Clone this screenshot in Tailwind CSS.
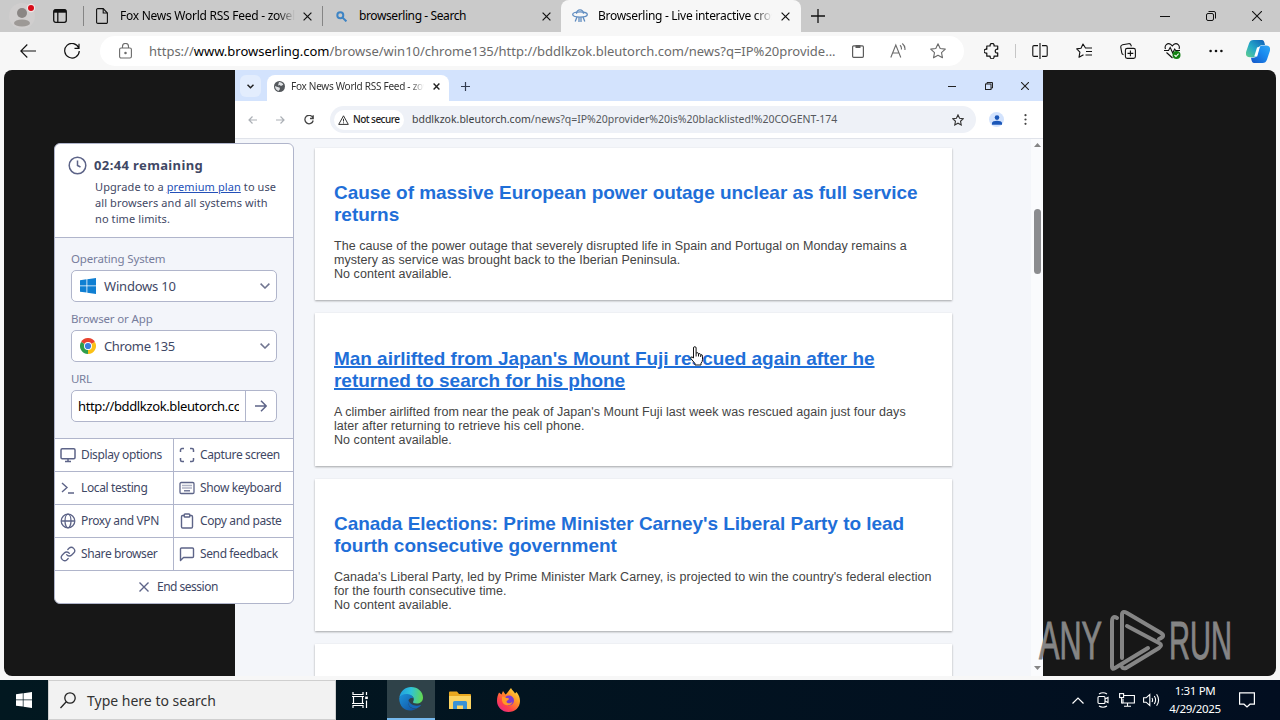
<!DOCTYPE html>
<html lang="en">
<head>
    <meta charset="UTF-8">
    <meta name="viewport" content="width=device-width, initial-scale=1.0">
    <title>Browserling - Live interactive cross-browser testing</title>
    <script src="https://cdn.jsdelivr.net/npm/@tailwindcss/browser@4"></script>
</head>
<body class="w-[1280px] h-[720px] overflow-hidden bg-[#f7f7f7] font-['Noto_Sans','Open_Sans',sans-serif] text-black flex flex-col relative">

    <!-- Edge tab strip -->
    <div class="h-8 shrink-0 bg-[#cacaca] flex items-center whitespace-nowrap">
        <div class="w-[44px] flex justify-center">
            <svg class="w-[26px] h-[26px]" viewBox="0 0 26 26">
                <circle cx="13" cy="13" r="13" fill="#d0cece"/>
                <circle cx="13" cy="10" r="5" fill="#8a8684"/>
                <ellipse cx="13" cy="20" rx="8" ry="3.6" fill="#9d9996"/>
                <circle cx="22" cy="5" r="4.2" fill="#f0e4e4"/>
                <circle cx="22" cy="5" r="3" fill="#d80b18"/>
            </svg>
        </div>
        <div class="w-[39px] flex justify-center">
            <svg class="w-[14px] h-[14px] -ml-[7px]" viewBox="0 0 14 14" fill="none" stroke="#111" stroke-width="1.3">
                <rect x=".7" y=".7" width="12.6" height="12.6" rx="2"/>
                <path d="M1 2.2h12" stroke-width="3"/><path d="M4.8 3v10"/>
            </svg>
        </div>
        <div class="w-px h-5 bg-[#858585]"></div>
        <div class="w-[238px] flex items-center pl-[12px]">
            <svg class="w-[12px] h-[16px] shrink-0" viewBox="0 0 12 16" fill="none" stroke="#111" stroke-width="1.1">
                <path d="M2 .6h5.2L11.4 5v9.2a1.2 1.2 0 0 1-1.2 1.2H2A1.2 1.2 0 0 1 .6 14.2V1.8A1.2 1.2 0 0 1 2 .6z"/><path d="M7.2 .8V5h4"/>
            </svg>
            <div class="ml-[12px] w-[175px] overflow-hidden text-[12px] leading-4 tracking-[-0.26px] mask-r-from-90%">Fox News World RSS Feed - zovel</div>
            <svg class="ml-[8px] w-[9px] h-[9px]" viewBox="0 0 9 9" stroke="#111" stroke-width="1.2"><path d="M.6.6l7.8 7.8M8.4.6L.6 8.4"/></svg>
        </div>
        <div class="w-px h-5 bg-[#858585]"></div>
        <div class="w-[238px] flex items-center pl-[13px]">
            <svg class="w-[11px] h-[11px] shrink-0" viewBox="0 0 11 11" fill="none" stroke="#3e84c4" stroke-width="2"><circle cx="4.3" cy="4.3" r="3"/><path d="M6.6 6.6l3.8 3.8"/></svg>
            <div class="ml-[12px] w-[176px] text-[12px] leading-4 tracking-[-0.4px]">browserling - Search</div>
            <svg class="ml-[7px] w-[9px] h-[9px]" viewBox="0 0 9 9" stroke="#111" stroke-width="1.2"><path d="M.6.6l7.8 7.8M8.4.6L.6 8.4"/></svg>
        </div>
        <div class="w-[240px] h-full rounded-t-lg bg-[#f7f7f7] flex items-center pl-[11px]">
            <svg class="w-4 h-[14px] shrink-0" viewBox="0 0 16 14" fill="none" stroke="#5f8cc0" stroke-width="1.3">
                <path d="M4.5 4.8a3.5 4 0 0 1 7 0"/><ellipse cx="8" cy="5.5" rx="7.3" ry="2.6"/><path d="M5 8L3.2 12.5M7 8.2V13M9 8.2V13M11 8l1.8 4.5"/>
            </svg>
            <div class="ml-[10px] w-[174px] overflow-hidden text-[12px] leading-4 tracking-[-0.3px] mask-r-from-90%">Browserling - Live interactive cross-</div>
            <svg class="ml-[9px] w-[9px] h-[9px]" viewBox="0 0 9 9" stroke="#111" stroke-width="1.2"><path d="M.6.6l7.8 7.8M8.4.6L.6 8.4"/></svg>
        </div>
        <svg class="ml-[10px] w-[14px] h-[14px]" viewBox="0 0 14 14" stroke="#111" stroke-width="1.3"><path d="M0 7h14M7 0v14"/></svg>
        <div class="ml-auto flex items-center">
            <div class="w-[46px] flex justify-center"><svg class="w-[10px] h-[10px]" viewBox="0 0 10 10" stroke="#111"><path d="M0 5.5h10"/></svg></div>
            <div class="w-[46px] flex justify-center"><svg class="w-[10px] h-[10px]" viewBox="0 0 10 10" fill="none" stroke="#111"><rect x=".5" y="2.5" width="7" height="7" rx="1.5"/><path d="M2.5.5H8A1.5 1.5 0 0 1 9.5 2v5.5"/></svg></div>
            <div class="w-[46px] flex justify-center"><svg class="w-[10px] h-[10px]" viewBox="0 0 10 10" stroke="#111" stroke-width="1.1"><path d="M0 0l10 10M10 0L0 10"/></svg></div>
        </div>
    </div>

    <!-- Edge toolbar -->
    <div class="h-[38px] shrink-0 flex items-center text-[#222]">
        <svg class="ml-[20px] w-4 h-[14px]" viewBox="0 0 16 14" fill="none" stroke="#111" stroke-width="1.1"><path d="M16 7H.8M7.3.5L.8 7l6.5 6.5"/></svg>
        <svg class="ml-[28px] w-4 h-4" viewBox="0 0 16 16" fill="none" stroke="#111" stroke-width="1.2"><path d="M14.8 5A7.3 7.3 0 1 0 15.3 8M15 .8v4.5h-4.5"/></svg>
        <div class="ml-[20px] w-[864px] h-[30px] rounded-full bg-white flex items-center text-[#6b6b6b]">
            <svg class="ml-[19px] w-[13px] h-[16px]" viewBox="0 0 13 16" fill="none" stroke="#6b6b6b" stroke-width="1.1"><rect x=".6" y="5" width="11.8" height="10" rx="1.5"/><path d="M3.5 5V3.5a3 3 0 0 1 6 0V5"/><circle cx="6.5" cy="10" r=".7" fill="#6b6b6b"/></svg>
            <div class="ml-[17px] w-[689px] whitespace-nowrap text-[13px] leading-5 tracking-[-0.01px]">https://<span class="text-black">www.browserling.com</span>/browse/win10/chrome135/http://bddlkzok.bleutorch.com/news?q=IP%20provide...</div>
            <div class="w-10 flex justify-center"><svg class="w-3 h-[14px]" viewBox="0 0 12 14" fill="none" stroke="#5c5c5c" stroke-width="1.2"><rect x=".6" y="1.9" width="10.8" height="11.4" rx="1"/><path d="M3.5 2.5h5" stroke-width="3"/></svg></div>
            <div class="w-10 flex justify-center"><svg class="w-4 h-4" viewBox="0 0 16 16" fill="none" stroke="#6b6b6b" stroke-width="1.1"><path d="M.8 14.5L5.8 2l5 12.5M2.5 10h6.6M10 2.2c1.3 1 1.6 2.6 1.4 4.3M12.3.5c2.2 1.8 3 4 2.6 6.5"/></svg></div>
            <div class="w-10 flex justify-center"><svg class="w-4 h-4" viewBox="0 0 16 16" fill="none" stroke="#6b6b6b" stroke-width="1.1" stroke-linejoin="round"><path d="M8 .8l2.2 4.7 5.1.6-3.8 3.5 1 5.2L8 12.2l-4.5 2.6 1-5.2L.7 6.1l5.1-.6z"/></svg></div>
        </div>
        <div class="ml-[5px] w-[46px] flex justify-center"><svg class="w-4 h-4" viewBox="0 0 16 16" fill="none" stroke="#111" stroke-width="1.2" stroke-linejoin="round"><path d="M2.8 3h3.4a2 2 0 1 1 3.8 0h3.7v3.3a1.9 1.9 0 1 0 0 3.6v3.3H10a2 2 0 1 1-3.8 0H2.8V10a2 2 0 1 1 0-3.7z"/></svg></div>
        <div class="w-px h-[14px] bg-[#c6c6c6]"></div>
        <div class="ml-[2px] w-[44px] flex justify-center"><svg class="w-4 h-4" viewBox="0 0 16 16" fill="none" stroke="#111" stroke-width="1.1"><path d="M6 2.6H2A1.2 1.2 0 0 0 .8 3.8v8.4A1.2 1.2 0 0 0 2 13.4h4M10 2.6h4a1.2 1.2 0 0 1 1.2 1.2v8.4a1.2 1.2 0 0 1-1.2 1.2h-4M8 0v16"/></svg></div>
        <div class="w-[44px] flex justify-center"><svg class="w-4 h-4" viewBox="0 0 16 16" fill="none" stroke="#111" stroke-width="1.1" stroke-linejoin="round"><path d="M9.5 5L7 1 5 5.3.7 5.9l3.2 3.2-.9 5.2 4.5-2.5M9 5h7M10 8.5h6M9.5 12H16"/></svg></div>
        <div class="w-[44px] flex justify-center"><svg class="w-4 h-4" viewBox="0 0 16 16" fill="none" stroke="#111" stroke-width="1.1"><rect x="5.4" y="5.4" width="10" height="10" rx="1.8"/><path d="M10.4 7.5v5.8M7.5 10.4h5.8M3.5 11.8A2.3 2.3 0 0 1 1.7 9.5L.8 4.3a2.3 2.3 0 0 1 1.8-2.6L8.5.7a2.3 2.3 0 0 1 2.6 1.6l.2 1"/></svg></div>
        <div class="w-[44px] flex justify-center"><svg class="w-[17px] h-4" viewBox="0 0 17 16" fill="none" stroke="#111" stroke-width="1.1"><path d="M1.5 6C0 2.5 3.5-.5 6.5 1.2L8.3 3l1.8-1.8C13-.5 16.5 2.5 15 6M0 7.5h4.5l1.7-3 2.5 5.5 2-4 1 1.5H16M2.5 9.5l6 5.5"/><circle cx="12.5" cy="12" r="4" fill="#138013" stroke="none"/><path d="M10.5 12l1.5 1.5 2.6-2.8" stroke="#fff"/></svg></div>
        <div class="w-[44px] flex justify-center"><svg class="w-[14px] h-1" viewBox="0 0 14 4" fill="#111"><circle cx="1.6" cy="2" r="1.3"/><circle cx="7" cy="2" r="1.3"/><circle cx="12.4" cy="2" r="1.3"/></svg></div>
        <svg class="ml-[8px] w-6 h-[23px]" viewBox="0 0 24 23">
            <defs>
                <linearGradient id="cp1" x1="0" y1="1" x2="1" y2="0"><stop offset="0" stop-color="#62cf8c"/><stop offset=".45" stop-color="#25a9c8"/><stop offset="1" stop-color="#0d5cb8"/></linearGradient>
                <linearGradient id="cp2" x1="0" y1="1" x2="1" y2="0"><stop offset="0" stop-color="#1556c8"/><stop offset=".6" stop-color="#1a8cf0"/><stop offset="1" stop-color="#30a8f5"/></linearGradient>
            </defs>
            <path d="M7.5 0h8.3c2 0 2.5 1.5 3.2 5h-2.5c-2 0-3 1-3.6 3l-2 6.5c-.6 2-1.6 2.8-3.4 2.8H4c-3.5 0-4.8-2.3-3.7-6L3 3.5C3.8 1 5.2 0 7.5 0z" fill="url(#cp1)"/>
            <path d="M16.5 23H8.2c-2 0-2.5-1.5-3.2-5.2h2.5c2 0 3-1 3.6-3l2-6.5c.6-2 1.6-2.8 3.4-2.8H20c3.5 0 4.8 2.3 3.7 6L21 19.5c-.8 2.5-2.2 3.5-4.5 3.5z" fill="url(#cp2)"/>
            <path d="M14 6.500L11.200 16.500H8.200l2.800-9z" fill="#fff"/>
        </svg>
    </div>

    <!-- Page area -->
    <div class="mx-1 h-[606px] shrink-0 rounded-lg bg-[#171717] overflow-hidden pl-[231px]">
        <div class="w-[808px] h-full bg-[#f4f6fa] flex flex-col whitespace-nowrap">

            <!-- Remote Chrome tab strip -->
            <div class="h-[31px] shrink-0 bg-[#d3e3fd] flex">
                <div class="ml-[5px] mt-[5px] w-[21px] h-[22px] rounded-md bg-[#e3edfd] flex items-center justify-center"><svg class="w-[7px] h-[5px]" viewBox="0 0 7 5" fill="none" stroke="#222" stroke-width="1.5"><path d="M.5.7l3 3 3-3"/></svg></div>
                <div class="ml-[6px] mt-[5px] w-[182px] rounded-t-lg bg-white flex items-center pb-1">
                    <svg class="ml-[7px] w-[11px] h-[11px] shrink-0" viewBox="0 0 11 11"><circle cx="5.5" cy="5.5" r="5.5" fill="#54585c"/><path d="M5 1c2 0 3.5 1 4.3 2.8L7 5 5.5 4 4 4.5zM1 5l2.5 1 2 .5.5 1.5-1.5 2C2.5 9.5 1 7.5 1 5z" fill="#dfe1e4"/></svg>
                    <div class="ml-[6px] w-[133px] overflow-hidden text-[10px] leading-4 tracking-[-0.27px] text-[#333] mask-r-from-90%">Fox News World RSS Feed - zovel</div>
                    <svg class="ml-[9px] w-[7px] h-[7px]" viewBox="0 0 7 7" stroke="#222" stroke-width="1.4"><path d="M.6.6l5.8 5.8M6.4.6L.6 6.4"/></svg>
                </div>
                <svg class="ml-[12px] mt-3 w-[9px] h-[9px]" viewBox="0 0 9 9" stroke="#333c50" stroke-width="1.2"><path d="M0 4.5h9M4.5 0v9"/></svg>
                <svg class="ml-auto mt-3 w-[8px] h-[8px]" viewBox="0 0 8 8" stroke="#222" stroke-width="1.2"><path d="M0 4.5h8"/></svg>
                <svg class="ml-[29px] mt-3 w-[8px] h-[8px]" viewBox="0 0 8 8" fill="none" stroke="#222"><rect x=".5" y="2" width="5.5" height="5.5"/><path d="M2 2V.5h5.5V6H6"/></svg>
                <svg class="ml-[28px] mr-[14px] mt-3 w-[8px] h-[8px]" viewBox="0 0 8 8" stroke="#222" stroke-width="1.1"><path d="M0 0l8 8M8 0L0 8"/></svg>
            </div>

            <!-- Remote Chrome toolbar -->
            <div class="h-[38px] shrink-0 bg-white border-b border-[#e0e3ea] flex items-center">
                <svg class="ml-[13px] w-[9px] h-[8px]" viewBox="0 0 9 8" fill="none" stroke="#acb0b6" stroke-width="1.2"><path d="M9 4H1M4.5.5L1 4l3.5 3.5"/></svg>
                <svg class="ml-[19px] w-[9px] h-[8px]" viewBox="0 0 9 8" fill="none" stroke="#acb0b6" stroke-width="1.2"><path d="M0 4h8M4.5.5L8 4 4.5 7.5"/></svg>
                <svg class="ml-[19px] w-[10px] h-[10px]" viewBox="0 0 10 10" fill="none" stroke="#444" stroke-width="1.3"><path d="M9 3A4.2 4.2 0 1 0 9.2 5.5M9.2.3v3.2H6"/></svg>
                <div class="ml-[16px] w-[646px] h-[27px] rounded-full bg-[#eef1f7] flex items-center text-[#3c4043]">
                    <div class="ml-[4px] w-[70px] h-[20px] rounded-full bg-white flex items-center text-[10px]">
                        <svg class="ml-[4px] w-[11px] h-[10px]" viewBox="0 0 11 10" fill="none" stroke="#333"><path d="M5.5.8L10.3 9.4H.7z"/><path d="M5.5 3.8v2.7M5.5 7.4v1"/></svg>
                        <span class="ml-[4px] font-medium text-[#222] tracking-[-0.55px]">Not secure</span>
                    </div>
                    <span class="ml-[8px] pt-px text-[10.5px]">bddlkzok.bleutorch.com<span class="text-[#55585c]">/news?q=IP%20provider%20is%20blacklisted!%20COGENT-174</span></span>
                    <svg class="ml-auto mr-[12px] w-[12px] h-[12px]" viewBox="0 0 16 16" fill="none" stroke="#333" stroke-width="1.5"><path d="M8 1.2l2.1 4.5 4.9.6-3.6 3.4.9 4.9L8 12.2l-4.3 2.4.9-4.9L1 6.3l4.9-.6z"/></svg>
                </div>
                <div class="ml-[13px] w-[15px] h-[15px] rounded-full bg-[#d3e3fd] flex items-center justify-center"><svg class="w-[10px] h-[10px]" viewBox="0 0 10 10" fill="#1a56b8"><circle cx="5" cy="2.6" r="2.3"/><path d="M0 9.8V8c0-3 10-3 10 0v1.8z"/></svg></div>
                <svg class="ml-[20px] w-[3px] h-[11px]" viewBox="0 0 3 11" fill="#444"><circle cx="1.5" cy="1.2" r="1.1"/><circle cx="1.5" cy="5.5" r="1.1"/><circle cx="1.5" cy="9.8" r="1.1"/></svg>
            </div>

            <!-- News feed -->
            <div class="flex-1 min-h-0 flex font-['Liberation_Sans',sans-serif]">
                <div class="flex-1 pl-[80px] pt-[9px] flex flex-col gap-[13px] overflow-hidden">
                    <div class="w-[637px] h-[152px] shrink-0 bg-white shadow-[0_1px_2px_#00000055] pl-[19px] pt-[34px]">
                        <h2 class="text-[19px] leading-[22px] font-bold tracking-[-0.04px] text-[#1f6fd8]">Cause of massive European power outage unclear as full service<br>returns</h2>
                        <p class="mt-[13px] text-[12.5px] leading-[14px] tracking-[0.05px] text-[#444]">The cause of the power outage that severely disrupted life in Spain and Portugal on Monday remains a<br>mystery as service was brought back to the Iberian Peninsula.<br>No content available.</p>
                    </div>
                    <div class="w-[637px] h-[153px] shrink-0 bg-white shadow-[0_1px_2px_#00000055] pl-[19px] pt-[35px]">
                        <h2 class="text-[19px] leading-[22px] font-bold tracking-[-0.04px] text-[#1f6fd8] underline decoration-2">Man airlifted from Japan's Mount Fuji rescued again after he<br>returned to search for his phone</h2>
                        <p class="mt-[13px] text-[12.5px] leading-[14px] tracking-[0.05px] text-[#444]">A climber airlifted from near the peak of Japan's Mount Fuji last week was rescued again just four days<br>later after returning to retrieve his cell phone.<br>No content available.</p>
                    </div>
                    <div class="w-[637px] h-[152px] shrink-0 bg-white shadow-[0_1px_2px_#00000055] pl-[19px] pt-[34px]">
                        <h2 class="text-[19px] leading-[22px] font-bold tracking-[-0.04px] text-[#1f6fd8]">Canada Elections: Prime Minister Carney's Liberal Party to lead<br>fourth consecutive government</h2>
                        <p class="mt-[13px] text-[12.5px] leading-[14px] tracking-[0.05px] text-[#444]">Canada's Liberal Party, led by Prime Minister Mark Carney, is projected to win the country's federal election<br>for the fourth consecutive time.<br>No content available.</p>
                    </div>
                    <div class="w-[637px] h-[153px] shrink-0 bg-white shadow-[0_1px_2px_#00000055]"></div>
                </div>
                <div class="w-[12px] bg-[#fafbfd] flex flex-col items-center">
                    <svg class="mt-1 w-[7px] h-[5px]" viewBox="0 0 7 5" fill="#858585"><path d="M3.5 0L7 4H0z"/></svg>
                    <div class="mt-[61px] w-[7px] h-[65px] rounded-full bg-[#8b8c8f]"></div>
                    <svg class="mt-auto mb-[6px] w-[7px] h-[5px]" viewBox="0 0 7 5" fill="#858585"><path d="M3.5 5L0 1h7z"/></svg>
                </div>
            </div>
        </div>
    </div>

    <!-- Session panel -->
    <div class="absolute left-[54px] top-[143px] w-[240px] h-[461px] rounded-md border border-[#b0b5cb] bg-white overflow-hidden flex flex-col text-[#3f4865] whitespace-nowrap">
        <div class="h-[93px] shrink-0 flex pl-[13px] pt-[12px]">
            <svg class="w-[19px] h-[19px] shrink-0" viewBox="0 0 19 19" fill="none" stroke="#5d6488" stroke-width="1.5"><circle cx="9.5" cy="9.5" r="8.3"/><path d="M9.5 4.5v5l3 1.5"/></svg>
            <div class="ml-[8px]">
                <div class="-ml-px text-[13px] leading-[18px] font-bold tracking-[0.38px]">02:44 remaining</div>
                <div class="mt-[5px] text-[11px] leading-4 tracking-[0.1px]">Upgrade to a <span class="underline text-[#2450b8]">premium plan</span> to use<br>all browsers and all systems with<br>no time limits.</div>
            </div>
        </div>
        <div class="h-[202px] shrink-0 border-y border-[#b0b5cb] bg-[#f3f5fa] px-[16px] pt-[12px]">
            <div class="h-5 text-[11.5px] leading-[17px] text-[#777d9c] tracking-[-0.15px]">Operating System</div>
            <div class="h-8 w-[206px] rounded-[5px] border border-[#b0b5cb] bg-white flex items-center px-[8px]">
                <svg class="w-4 h-4" viewBox="0 0 16 16" fill="#0f7fd2"><path d="M0 2.2L6.5 1.3v6.2H0zM7.3 1.2L16 0v7.5H7.3zM0 8.3h6.5v6.3L0 13.7zM7.3 8.3H16V16l-8.7-1.2z"/></svg>
                <span class="ml-[8px] pt-0.5 text-[13px] tracking-[-0.2px]">Windows 10</span>
                <svg class="ml-auto -mr-[2px] w-[10px] h-[6px]" viewBox="0 0 10 6" fill="none" stroke="#707590" stroke-width="1.5"><path d="M.6.6L5 5 9.4.6"/></svg>
            </div>
            <div class="mt-[8px] h-5 text-[11.5px] leading-[17px] text-[#777d9c] tracking-[-0.15px]">Browser or App</div>
            <div class="h-8 w-[206px] rounded-[5px] border border-[#b0b5cb] bg-white flex items-center px-[8px]">
                <svg class="w-4 h-4" viewBox="0 0 16 16">
                    <path d="M8 8L1.07 4A8 8 0 0 1 14.93 4z" fill="#e8432f"/>
                    <path d="M8 8L14.93 4A8 8 0 0 1 8 16z" fill="#fbc116"/>
                    <path d="M8 8V16A8 8 0 0 1 1.07 4z" fill="#2f9e4c"/>
                    <circle cx="8" cy="8" r="4" fill="#fff"/><circle cx="8" cy="8" r="3.1" fill="#3a7de0"/>
                </svg>
                <span class="ml-[8px] pt-0.5 text-[13px] tracking-[-0.35px]">Chrome 135</span>
                <svg class="ml-auto -mr-[2px] w-[10px] h-[6px]" viewBox="0 0 10 6" fill="none" stroke="#707590" stroke-width="1.5"><path d="M.6.6L5 5 9.4.6"/></svg>
            </div>
            <div class="mt-[8px] h-5 text-[11.5px] leading-[17px] text-[#777d9c] tracking-[-0.3px]">URL</div>
            <div class="h-8 w-[206px] rounded-[5px] border border-[#b0b5cb] bg-white flex items-center pl-[6px]">
                <div class="w-[161px] overflow-hidden pt-0.5 text-[13px] text-black tracking-[-0.37px]">http://bddlkzok.bleutorch.com</div>
                <div class="ml-[6px] w-px h-full bg-[#b0b5cb]"></div>
                <svg class="ml-[9px] w-3 h-3" viewBox="0 0 12 12" fill="none" stroke="#5d6488" stroke-width="1.5"><path d="M0 6h11M6 .8L11.2 6 6 11.2"/></svg>
            </div>
        </div>
        <div class="grid grid-cols-[119px_119px] auto-rows-[33px] text-[12px] tracking-[-0.38px] [&>div]:flex [&>div]:items-center [&>div]:gap-[5px] [&>div]:pl-[5px] [&>div]:border-b [&>div]:border-[#b0b5cb] [&>div:nth-child(odd)]:border-r [&_svg]:w-4 [&_svg]:h-4 [&_svg]:shrink-0">
            <div><svg viewBox="0 0 16 16" fill="none" stroke="#5d6488" stroke-width="1.5"><rect x="1" y="1.8" width="14" height="10" rx="1.2"/><path d="M8 12v3M5 14.5h6"/></svg>Display options</div>
            <div><svg viewBox="0 0 16 16" fill="none" stroke="#5d6488" stroke-width="1.5"><path d="M1.5 5V3A1.5 1.5 0 0 1 3 1.5h2M11 1.5h2A1.5 1.5 0 0 1 14.5 3v2M14.5 11v2a1.5 1.5 0 0 1-1.5 1.5h-2M5 14.5H3A1.5 1.5 0 0 1 1.5 13v-2"/></svg>Capture screen</div>
            <div><svg viewBox="0 0 16 16" fill="none" stroke="#5d6488" stroke-width="1.4"><path d="M2 3l5 4.5L2 12M8 13h6"/></svg>Local testing</div>
            <div><svg viewBox="0 0 16 16" fill="none" stroke="#5d6488" stroke-width="1.3"><rect x="1" y="2.5" width="14" height="11" rx="1.2"/><path d="M3.5 5.5h9M3.5 8h9" stroke-dasharray="1 1"/><path d="M5 10.8h6"/></svg>Show keyboard</div>
            <div><svg viewBox="0 0 16 16" fill="none" stroke="#5d6488" stroke-width="1.3"><circle cx="8" cy="8" r="6.8"/><ellipse cx="8" cy="8" rx="3" ry="6.8"/><path d="M1.2 8h13.6"/></svg>Proxy and VPN</div>
            <div><svg viewBox="0 0 16 16" fill="none" stroke="#5d6488" stroke-width="1.4"><rect x="2.5" y="2.5" width="11" height="12.5" rx="1.2"/><rect x="5.2" y="1" width="5.6" height="3" rx=".8" fill="#fff"/></svg>Copy and paste</div>
            <div><svg viewBox="0 0 24 24" fill="none" stroke="#5d6488" stroke-width="2" stroke-linecap="round"><path d="M10 13a5 5 0 0 0 7.54.54l3-3a5 5 0 0 0-7.07-7.07l-1.72 1.71"/><path d="M14 11a5 5 0 0 0-7.54-.54l-3 3a5 5 0 0 0 7.07 7.07l1.71-1.71"/></svg>Share browser</div>
            <div><svg viewBox="0 0 16 16" fill="none" stroke="#5d6488" stroke-width="1.4" stroke-linejoin="round"><path d="M2.5 2h11a1 1 0 0 1 1 1v7.5a1 1 0 0 1-1 1h-9L1.5 14.5V3a1 1 0 0 1 1-1z"/></svg>Send feedback</div>
        </div>
        <div class="flex-1 flex items-center pl-[84px] text-[12px] tracking-[-0.5px]">
            <svg class="w-[10px] h-[10px] mr-[8px]" viewBox="0 0 10 10" stroke="#5d6488" stroke-width="1.4"><path d="M.5.5l9 9M9.5.5l-9 9"/></svg>End session
        </div>
    </div>

    <!-- Watermark -->
    <svg class="absolute left-[1038px] top-[605px] w-[200px] h-[68px]" viewBox="0 0 200 68" fill="#858585">
        <text x="1" y="54" font-family="Liberation Sans" font-size="54" textLength="63" lengthAdjust="spacingAndGlyphs" stroke="#858585" stroke-width="1">ANY</text>
        <text x="131" y="54" font-family="Liberation Sans" font-size="54" textLength="63" lengthAdjust="spacingAndGlyphs" stroke="#858585" stroke-width="1">RUN</text>
        <g fill="none" stroke="#858585" stroke-width="4" stroke-linejoin="round" stroke-linecap="round">
            <path d="M79 15q-5-3-5 4v45q0 3 3 1l33-20" transform="translate(0 -2)"/>
            <path d="M84 53V10q0-5 5-2l34 20q5 3-2 6"/>
            <path d="M89 21l32 17q4 2 0 5L88 63q-3 1-4-1"/>
        </g>
    </svg>

    <!-- Hand pointer -->
    <svg class="absolute left-[690px] top-[346px] w-[13px] h-[20px]" viewBox="0 0 13 20" fill="#fff" stroke="#111" stroke-width="1" stroke-linejoin="round">
        <path d="M3.5 12V2a1.3 1.3 0 0 1 2.6 0v5q2.2-1 2.4.8 2-.6 2.2.8 1.8-.2 1.8 1.6v3.5q0 2-1.5 3.5v1.8H5v-1.5L.8 12.5q-.5-2 1.2-1.5z"/><path d="M6.1 7v3.5M8.5 8v2.5M10.7 9v2"/>
    </svg>

    <!-- Windows taskbar -->
    <div class="mt-1 h-10 shrink-0 bg-linear-to-r from-[#021820] to-[#020e20] flex items-center text-white whitespace-nowrap">
        <div class="w-12 flex justify-center"><svg class="w-4 h-4" viewBox="0 0 16 16" fill="#fff"><path d="M0 2.2l6.8-.9v6.2H0zM7.5 1.2L16 0v7.5H7.5zM0 8.3h6.8v6.3L0 13.7zM7.5 8.3H16V16l-8.5-1.2z"/></svg></div>
        <div class="w-[288px] h-full bg-[#f2f2f2] border border-[#cfcfcf] flex items-center text-[#333]">
            <svg class="ml-[11px] w-4 h-[17px]" viewBox="0 0 16 17" fill="none" stroke="#222" stroke-width="1.3"><circle cx="10" cy="6" r="5.2"/><path d="M6.3 9.8L.5 16"/></svg>
            <span class="ml-[11px] pt-px text-[14px]">Type here to search</span>
        </div>
        <div class="w-[51px] flex justify-center pr-1"><svg class="w-4 h-4" viewBox="0 0 16 16" fill="none" stroke="#fff" stroke-width="1.2"><path d="M1 0v2.5h10V0M1 16v-2.5h10V16M0 4.5h12M0 11.5h12M1.5 4.5v7M10.5 4.5v7M14.5 0v3M14.5 8.5V16"/><path d="M13.2 5.8h2.6" stroke-width="2.5"/></svg></div>
        <div class="w-12 h-full bg-[#2f4249] border-b-2 border-[#76b9ed] flex items-center justify-center">
            <svg class="w-6 h-6" viewBox="0 0 24 24">
                <defs>
                    <linearGradient id="ed1" x1="0" y1=".2" x2="1" y2=".3"><stop offset="0" stop-color="#1f9de0"/><stop offset=".5" stop-color="#2fc3d8"/><stop offset="1" stop-color="#62d852"/></linearGradient>
                    <linearGradient id="ed2" x1="0" y1="0" x2="1" y2="1"><stop offset="0" stop-color="#1b93da"/><stop offset="1" stop-color="#124f9f"/></linearGradient>
                </defs>
                <path d="M.3 10.5C1.5 4 6.5 0 12 0c7 0 12 5 12 10.5 0 4-3 6-6.3 6-3 0-4.2-1-3.5-2 1.7-2.5 0-6.5-4.5-6.5C5 7.5 1.5 9 .3 10.5z" fill="url(#ed1)"/>
                <path d="M.2 11C1.5 8 5 6.5 8.5 7c3.5.3 5.5 2.5 5.8 4.5-2.5-1.5-5.5.5-5.3 4 .2 4 4 7 8.5 6-7 5-17.5 1-17.3-10.5z" fill="url(#ed2)"/>
                <path d="M9.5 12.5c-2 5 2 9.5 8 9 2-.8 3.6-2.2 4.7-3.8-5.5 2.3-11.7.3-12.7-5.2z" fill="#1668b8"/>
            </svg>
        </div>
        <div class="w-[49px] flex justify-center"><svg class="w-[22px] h-[19px]" viewBox="0 0 22 19"><path d="M0 1.5A1 1 0 0 1 1 .5h7l2 2.5h11a1 1 0 0 1 1 1V18H0z" fill="#e9a820"/><path d="M0 5h22v13H0z" fill="#fcd462"/><path d="M4 18v-6.5A1.5 1.5 0 0 1 5.5 10h11a1.5 1.5 0 0 1 1.5 1.5V18h-4v-3.5H8V18z" fill="#3a92d4"/></svg></div>
        <div class="w-[49px] flex justify-center"><svg class="w-[23px] h-[24px]" viewBox="0 0 23 24">
            <defs><linearGradient id="ff1" x1="1" y1="0" x2=".2" y2="1"><stop offset="0" stop-color="#fff04a"/><stop offset=".4" stop-color="#ff9a26"/><stop offset=".75" stop-color="#ff4248"/><stop offset="1" stop-color="#e8268a"/></linearGradient></defs>
            <path d="M2 4.5l2.5 2L6 3l2.5 3.5C10 5.5 11.5 3 14 0c1 2.5 3 3 4 5.500l1.5-1.5C22 7 23 10 23 13c0 6.5-5 11-11.5 11S0 19 0 13c0-3 .5-5.5 2-8.5z" fill="url(#ff1)"/>
            <circle cx="12" cy="12.5" r="5" fill="#7b3bd0"/><path d="M5 8.5c2 0 3.5.5 4 1.5 2 0 3 .2 3 1-1 1.5-2.5 1.5-2.5 3 1 2 5 1.5 6-.5-.5 5-9.5 5.5-10.5-1z" fill="#ff9a26"/>
        </svg></div>
        <svg class="ml-auto w-3 h-[7px]" viewBox="0 0 12 7" fill="none" stroke="#fff" stroke-width="1.2"><path d="M.5 6.5L6 1l5.5 5.5"/></svg>
        <svg class="ml-[13px] w-3 h-4" viewBox="0 0 12 16" fill="none" stroke="#fff" stroke-width="1.1"><rect x="1" y="4.5" width="7" height="7" rx="1"/><path d="M8 7l3-1.5v5L8 9M2 2q4-2.5 8 0M2 14q4 2.5 8 0"/></svg>
        <svg class="ml-[10px] w-4 h-[14px]" viewBox="0 0 16 14" fill="none" stroke="#fff" stroke-width="1.1"><path d="M5 2.5h10.400v7.5H4V6M8.5 10v3M5 13.3h7"/><rect x=".6" y=".6" width="4" height="4"/><path d="M2.6 4.5V10H4"/></svg>
        <svg class="ml-[8px] w-[17px] h-[14px]" viewBox="0 0 17 14" fill="none" stroke="#fff" stroke-width="1.1"><path d="M.6 4.8h2.5L6.8 1.5v11L3.1 9.2H.6zM9 5q1.2 2 0 4M11.3 3q2.6 4 0 8M13.6 1.2q4 5.8 0 11.6"/></svg>
        <div class="ml-[7px] w-[56px] text-center text-[11.5px] leading-[18px] tracking-[-0.35px]">1:31 PM<br>4/29/2025</div>
        <svg class="ml-[16px] mr-[25px] w-4 h-4" viewBox="0 0 16 16" fill="none" stroke="#fff" stroke-width="1.2"><path d="M.6.8h14.8v11.4H11L8 15l-3-2.8H.6z"/></svg>
    </div>

</body>
</html>
